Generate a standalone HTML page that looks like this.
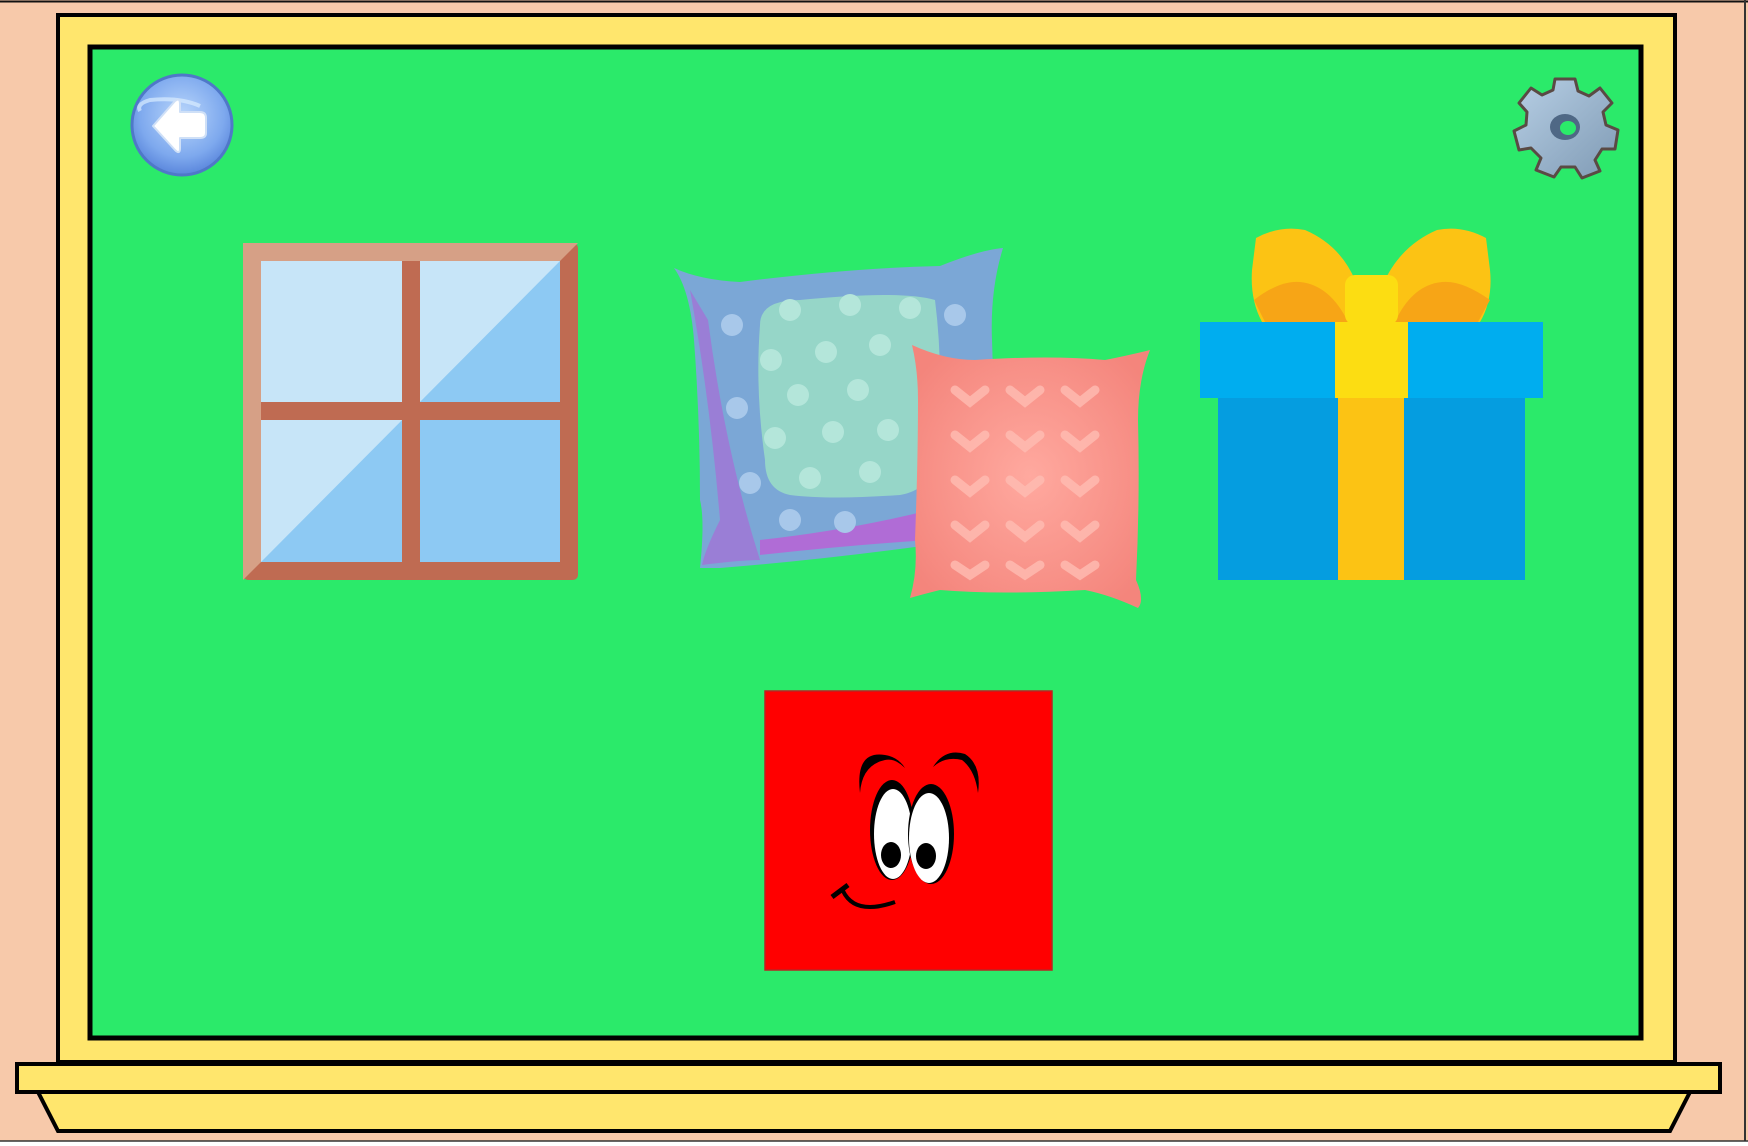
<!DOCTYPE html>
<html><head><meta charset="utf-8"><style>
html,body{margin:0;padding:0;background:#f7c9aa;}
svg{display:block}
</style></head><body>
<svg width="1748" height="1146" viewBox="0 0 1748 1146" xmlns="http://www.w3.org/2000/svg">
<defs>
<radialGradient id="bb" cx="0.5" cy="0.4" r="0.6"><stop offset="0" stop-color="#b9d6fb"/><stop offset="0.7" stop-color="#7ea9ee"/><stop offset="1" stop-color="#5a86dc"/></radialGradient>
<linearGradient id="gg" x1="0" y1="0" x2="1" y2="1"><stop offset="0" stop-color="#b7cfe5"/><stop offset="1" stop-color="#7f9ab4"/></linearGradient>
<radialGradient id="pk" cx="0.5" cy="0.5" r="0.6"><stop offset="0" stop-color="#ffa99f"/><stop offset="1" stop-color="#f4857c"/></radialGradient>
</defs>
<rect width="1748" height="1146" fill="#f7c9aa"/>
<line x1="0" y1="1.5" x2="1748" y2="1.5" stroke="#111" stroke-width="2"/>
<line x1="1745" y1="0" x2="1745" y2="1146" stroke="#333" stroke-width="2"/>
<rect x="0" y="1141" width="1748" height="5" fill="#fff"/>
<line x1="0" y1="1141" x2="1748" y2="1141" stroke="#333" stroke-width="1.5"/>
<!-- frame -->
<rect x="58" y="15" width="1617" height="1047" fill="#ffe66d" stroke="#000" stroke-width="4"/>
<rect x="90" y="47" width="1551" height="991" fill="#2bea6a" stroke="#000" stroke-width="5"/>
<!-- shelf -->
<polygon points="38,1092 1690,1092 1670,1131 58,1131" fill="#ffe66d" stroke="#000" stroke-width="4"/>
<rect x="17" y="1064" width="1703" height="28" fill="#ffe66d" stroke="#000" stroke-width="4"/>
<!-- back button -->
<circle cx="182" cy="125" r="50" fill="url(#bb)" stroke="#4f78c8" stroke-width="3"/>
<path d="M140,111 Q136,104 150,100 Q180,97 200,106" fill="none" stroke="#d8ecff" stroke-width="4" opacity="0.7"/>
<path d="M153,126 L175,101 Q180,97 180,104 L180,112 L200,112 Q206,112 206,118 L206,133 Q206,138 200,138 L180,138 L180,148 Q180,155 175,150 Z" fill="#fff" stroke="#cfe0f7" stroke-width="2" stroke-linejoin="round"/>
<!-- gear -->
<g transform="translate(1565,125)">
<path d="M-10,-46 L10,-46 L13,-34 L24,-29 L35,-37 L47,-22 L38,-13 L41,0 L53,5 L50,24 L37,24 L30,35 L35,46 L17,53 L10,42 L-4,42 L-11,52 L-29,45 L-24,33 L-34,23 L-46,25 L-51,6 L-39,0 L-38,-13 L-46,-22 L-34,-37 L-23,-30 L-12,-35 Z" fill="url(#gg)" stroke="#5a4a44" stroke-width="3" stroke-linejoin="round"/>
<ellipse cx="0" cy="2" rx="15" ry="13" fill="#4f6885"/>
<ellipse cx="3" cy="3" rx="8" ry="7" fill="#2bea6a"/>
</g>
<!-- window -->
<rect x="243" y="243" width="335" height="337" rx="5" fill="#bf6b52"/>
<polygon points="243,243 578,243 560,261 261,261 261,562 243,580" fill="#d6a086"/>
<rect x="261" y="261" width="299" height="301" fill="#8dc9f3"/>
<polygon points="261,261 560,261 261,562" fill="#c7e5f8"/>
<rect x="402" y="261" width="18" height="301" fill="#bf6b52"/>
<rect x="261" y="402" width="299" height="18" fill="#bf6b52"/>
<!-- blue pillow -->
<path d="M674,268 Q700,280 740,282 Q850,268 940,266 Q980,250 1003,248 Q990,290 992,340 Q996,450 990,560 Q960,555 930,545 Q820,560 720,568 Q700,568 700,568 Q705,520 700,500 Q700,420 694,340 Q690,290 674,268 Z" fill="#7ba7d6"/>
<path d="M690,290 Q710,400 720,520 Q705,550 702,565 Q740,560 760,560 Q725,450 708,320 Z" fill="#9a7ed6"/>
<path d="M760,555 Q850,545 930,540 Q940,520 930,510 Q850,530 760,540 Z" fill="#b06cd6"/>
<path d="M760,325 Q760,300 800,300 Q900,290 935,300 Q945,380 935,460 Q930,490 900,495 Q830,500 790,495 Q765,490 765,460 Q755,390 760,325 Z" fill="#96d6c8"/>
<g fill="#b4e6da">
<circle cx="790" cy="310" r="11"/><circle cx="850" cy="305" r="11"/><circle cx="910" cy="308" r="11"/>
<circle cx="771" cy="360" r="11"/><circle cx="826" cy="352" r="11"/><circle cx="880" cy="345" r="11"/>
<circle cx="798" cy="395" r="11"/><circle cx="858" cy="390" r="11"/><circle cx="775" cy="438" r="11"/>
<circle cx="833" cy="432" r="11"/><circle cx="888" cy="430" r="11"/><circle cx="810" cy="478" r="11"/><circle cx="870" cy="472" r="11"/>
</g>
<g fill="#a8c8ea"><circle cx="732" cy="325" r="11"/><circle cx="737" cy="408" r="11"/><circle cx="750" cy="483" r="11"/><circle cx="790" cy="520" r="11"/><circle cx="845" cy="522" r="11"/><circle cx="955" cy="315" r="11"/></g>
<!-- pink pillow -->
<path d="M912,345 Q945,360 975,360 Q1050,355 1105,360 Q1130,355 1150,350 Q1138,380 1138,420 Q1140,500 1136,580 Q1145,600 1138,608 Q1110,595 1085,590 Q1000,595 940,590 Q920,595 910,598 Q918,570 915,540 Q918,460 918,400 Q918,370 912,345 Z" fill="url(#pk)"/>
<g fill="none" stroke="#ffbdb3" stroke-width="9" stroke-linecap="round" opacity="0.8">
<path d="M955,390 l15,12 l15,-12 M1010,390 l15,12 l15,-12 M1065,390 l15,12 l15,-12"/>
<path d="M955,435 l15,12 l15,-12 M1010,435 l15,12 l15,-12 M1065,435 l15,12 l15,-12"/>
<path d="M955,480 l15,12 l15,-12 M1010,480 l15,12 l15,-12 M1065,480 l15,12 l15,-12"/>
<path d="M955,525 l15,12 l15,-12 M1010,525 l15,12 l15,-12 M1065,525 l15,12 l15,-12"/>
<path d="M955,565 l15,10 l15,-10 M1010,565 l15,10 l15,-10 M1065,565 l15,10 l15,-10"/>
</g>
<!-- gift -->
<path d="M1256,238 Q1280,225 1305,230 Q1340,245 1355,280 L1350,322 L1262,322 Q1250,300 1252,270 Z" fill="#fcc314"/>
<path d="M1486,238 Q1462,225 1437,230 Q1402,245 1385,280 L1392,322 L1480,322 Q1493,300 1490,270 Z" fill="#fcc314"/>
<path d="M1254,300 Q1280,280 1300,282 Q1330,285 1348,322 L1265,322 Z" fill="#f7a516"/>
<path d="M1490,300 Q1462,280 1442,282 Q1412,285 1395,322 L1478,322 Z" fill="#f7a516"/>
<rect x="1345" y="275" width="53" height="50" rx="10" fill="#fcdd12"/>
<rect x="1218" y="398" width="307" height="182" fill="#059de0"/>
<rect x="1338" y="398" width="66" height="182" fill="#fcc314"/>
<rect x="1200" y="322" width="343" height="76" fill="#00adef"/>
<rect x="1335" y="322" width="73" height="76" fill="#fcdd12"/>
<!-- red square -->
<rect x="765" y="691" width="287" height="279" fill="#ff0000" stroke="#b22" stroke-width="1.5"/>
<path d="M860,793 Q855,750 885,755 Q898,757 905,768 Q895,758 885,760 Q862,765 860,793 Z" fill="#000"/>
<path d="M933,767 Q945,748 965,754 Q982,765 978,793 Q975,770 962,760 Q945,756 933,767 Z" fill="#000"/>
<ellipse cx="892" cy="830" rx="22" ry="50" fill="#000"/>
<ellipse cx="893" cy="834" rx="19" ry="45" fill="#fff"/>
<ellipse cx="931" cy="834" rx="23" ry="50" fill="#000"/>
<ellipse cx="929" cy="838" rx="20" ry="45" fill="#fff"/>
<ellipse cx="891" cy="855" rx="10" ry="13" fill="#000"/>
<ellipse cx="926" cy="856" rx="10" ry="13" fill="#000"/>
<path d="M843,891 Q855,916 895,902" fill="none" stroke="#000" stroke-width="4"/>
<path d="M832,897 L848,885" stroke="#000" stroke-width="5"/>
</svg>
</body></html>
